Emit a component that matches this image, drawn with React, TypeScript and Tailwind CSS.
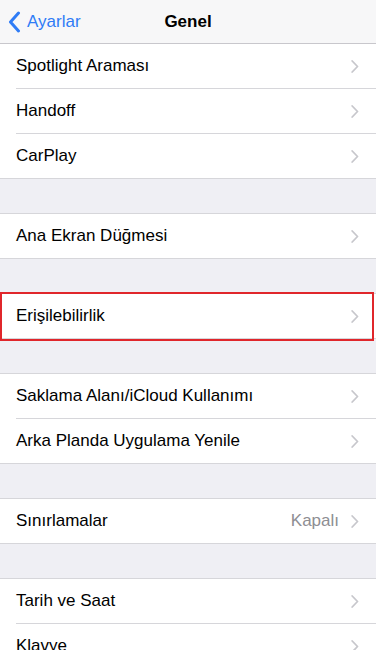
import React from "react";

type Row = { label: string; value?: string };

const groups: Row[][] = [
  [{ label: "Spotlight Araması" }, { label: "Handoff" }, { label: "CarPlay" }],
  [{ label: "Ana Ekran Düğmesi" }],
  [{ label: "Erişilebilirlik" }],
  [{ label: "Saklama Alanı/iCloud Kullanımı" }, { label: "Arka Planda Uygulama Yenile" }],
  [{ label: "Sınırlamalar", value: "Kapalı" }],
  [{ label: "Tarih ve Saat" }, { label: "Klavye" }],
];

function Chevron() {
  return (
    <svg width="8" height="13" viewBox="0 0 8 13" className="shrink-0">
      <path d="M1.2 1 L6.5 6.5 L1.2 12" fill="none" stroke="#c7c7cc" strokeWidth="1.8" strokeLinecap="round" strokeLinejoin="round" />
    </svg>
  );
}

export default function App() {
  return (
    <div className="w-[376px] h-[650px] overflow-hidden bg-[#efeff4]" style={{ fontFamily: '"Liberation Sans", Arial, sans-serif' }}>
      <div className="relative h-[44px] bg-[#f7f7f8] border-b border-[#c8c7cc] flex items-center">
        <div className="flex items-center pl-[8px] text-[#2f7cf6] text-[17px]">
          <svg width="13" height="22" viewBox="0 0 13 22" className="mr-[6px]">
            <path d="M10.5 2 L2.5 11 L10.5 20" fill="none" stroke="#2f7cf6" strokeWidth="3" strokeLinecap="round" strokeLinejoin="round" />
          </svg>
          <span>Ayarlar</span>
        </div>
        <div className="absolute left-0 right-0 text-center text-[17px] font-bold text-black pointer-events-none">Genel</div>
      </div>
      <div className="flex flex-col">
        {groups.map((g, gi) => (
          <div
            key={gi}
            className={`relative bg-white border-b border-[#d6d6da] ${gi === 0 ? "" : "mt-[34px] border-t"}`}
          >
            {g.map((r, ri) => (
              <React.Fragment key={ri}>
                <div className="flex items-center h-[44px] pl-[16px] pr-[17px]">
                  <span className="flex-1 text-[17px] text-black">{r.label}</span>
                  {r.value && <span className="text-[17px] text-[#8e8e93] mr-[12px]">{r.value}</span>}
                  <Chevron />
                </div>
                {ri < g.length - 1 && <div className="ml-[16px] h-px bg-[#d6d6da]" />}
              </React.Fragment>
            ))}
            {gi === 2 && (
              <div className="absolute left-0 top-[-2px] w-[374px] h-[49px] border-2 border-[#e0262b] pointer-events-none" />
            )}
          </div>
        ))}
      </div>
    </div>
  );
}
